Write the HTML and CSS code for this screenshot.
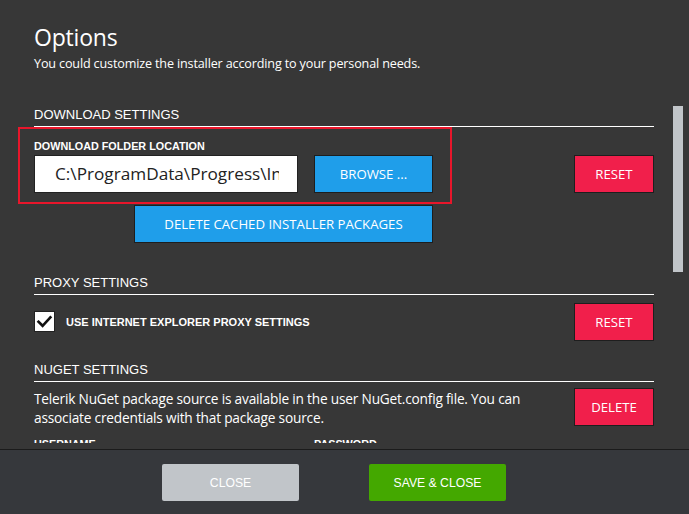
FILE: index.html
```html
<!DOCTYPE html>
<html>
<head>
<meta charset="utf-8">
<link rel="stylesheet" href="styles.css">
</head>
<body>
<div class="window">
  <div class="scroll">
    <div class="viewport">
    <div class="content">
      <h1 class="title">Options</h1>
      <p class="subtitle">You could customize the installer according to your personal needs.</p>

      <section class="section download">
        <h2 class="sec-title">DOWNLOAD SETTINGS</h2>
        <div class="sec-body">
          <div class="main">
            <div class="field-label">DOWNLOAD FOLDER LOCATION</div>
            <div class="folder-row">
              <div class="path-input"><span>C:\ProgramData\Progress\Installer</span></div>
              <button class="btn btn-blue browse">BROWSE ...</button>
            </div>
            <button class="btn btn-blue delete-cache">DELETE CACHED INSTALLER PACKAGES</button>
          </div>
          <div class="side side-download">
            <button class="btn btn-red">RESET</button>
          </div>
        </div>
        <div class="highlight"></div>
      </section>

      <section class="section proxy">
        <h2 class="sec-title">PROXY SETTINGS</h2>
        <div class="sec-body">
          <div class="main check-row">
            <span class="checkbox">
              <svg viewBox="0 0 21 21" width="21" height="21"><path d="M4.5 10.8 L8.6 14.8 L16.4 6.4" fill="none" stroke="#111" stroke-width="2.6" stroke-linecap="square"/></svg>
            </span>
            <span class="check-label">USE INTERNET EXPLORER PROXY SETTINGS</span>
          </div>
          <div class="side">
            <button class="btn btn-red">RESET</button>
          </div>
        </div>
      </section>

      <section class="section nuget">
        <h2 class="sec-title">NUGET SETTINGS</h2>
        <div class="sec-body">
          <div class="main">
            <p class="nuget-text">Telerik NuGet package source is available in the user NuGet.config file. You can associate credentials with that package source.</p>
          </div>
          <div class="side">
            <button class="btn btn-red">DELETE</button>
          </div>
        </div>
        <div class="cred-labels">
          <span class="cred user">USERNAME</span>
          <span class="cred pass">PASSWORD</span>
        </div>
      </section>
    </div>
    </div>
    <div class="scrollbar"></div>
  </div>
  <div class="footer">
    <button class="fbtn fbtn-gray">CLOSE</button>
    <button class="fbtn fbtn-green">SAVE &amp; CLOSE</button>
  </div>
</div>
</body>
</html>
```

FILE: styles.css
```css
* { box-sizing: border-box; }

html, body {
  margin: 0;
  padding: 0;
  background: #373737;
}

body {
  font-family: "Open Sans", "Noto Sans", sans-serif;
  color: #fff;
}

.window {
  width: 689px;
  height: 514px;
  display: flex;
  flex-direction: column;
  background: #373737;
}

.scroll {
  position: relative;
  height: 450px;
  border-bottom: 1px solid #1b1b1b;
}

.viewport {
  height: 443px;
  overflow: hidden;
}

.content {
  width: 654px;
  padding: 21px 0 0 34px;
}

.title {
  margin: 0;
  font-weight: 400;
  font-size: 23px;
  line-height: 32px;
  letter-spacing: -0.2px;
}

.subtitle {
  margin: 3px 0 0;
  font-size: 12.6px;
  line-height: 16px;
  letter-spacing: -0.15px;
}

.section {
  position: relative;
}

.sec-title {
  margin: 0;
  font-family: "Liberation Sans", Arial, sans-serif;
  font-weight: 400;
  font-size: 13px;
  line-height: 15px;
  padding-bottom: 4px;
  border-bottom: 1px solid #fff;
}

.download { margin-top: 35px; }

.sec-body {
  display: grid;
  grid-template-columns: 1fr 80px;
  column-gap: 0;
}

.field-label {
  margin-top: 13px;
  font-family: "Liberation Sans", Arial, sans-serif;
  font-weight: 700;
  font-size: 10.8px;
  line-height: 12px;
}

.folder-row {
  display: flex;
  gap: 16px;
  margin-top: 3px;
}

.path-input {
  width: 264px;
  height: 38px;
  background: #fff;
  border: 1px solid #222;
  overflow: hidden;
  white-space: nowrap;
  color: #222;
  font-size: 17.2px;
  line-height: 35px;
  padding: 0 18px 0 20px;
}

.path-input span {
  display: block;
  overflow: hidden;
}

.btn {
  font-family: "Open Sans", "Noto Sans", sans-serif;
  color: #fff;
  font-size: 13.2px;
  border: 1px solid #1e1e1e;
  height: 38px;
  padding: 0;
  cursor: pointer;
}

.btn-blue { background: #1f9eea; }
.btn-red { background: #f11f4b; width: 80px; }

.browse { width: 119px; }

.delete-cache {
  display: block;
  width: 299px;
  height: 38px;
  margin: 12px 0 0 100px;
}

.side {
  display: flex;
  align-items: flex-start;
}

.side-download { padding-top: 28px; }

.highlight {
  position: absolute;
  left: -16px;
  top: 20px;
  width: 434px;
  height: 77px;
  border: 2px solid #e8162b;
  pointer-events: none;
}

.proxy { margin-top: 32px; }

.proxy .side { padding-top: 8px; }

.check-row {
  display: flex;
  align-items: center;
  gap: 11px;
  margin-top: 16px;
  align-self: start;
}

.checkbox {
  width: 21px;
  height: 21px;
  background: #fff;
  border: 1px solid #222;
  display: flex;
  align-items: center;
  justify-content: center;
}

.checkbox svg { display: block; margin: -1px; }

.check-label {
  font-family: "Liberation Sans", Arial, sans-serif;
  font-weight: 700;
  font-size: 11px;
}

.nuget { margin-top: 21px; }

.nuget .side { padding-top: 6px; }

.nuget-text {
  margin: 7px 0 0;
  width: 500px;
  font-size: 13.7px;
  line-height: 19px;
  letter-spacing: -0.2px;
}

.cred-labels {
  display: flex;
  margin-top: 11px;
  font-family: "Liberation Sans", Arial, sans-serif;
  font-weight: 700;
  font-size: 10.8px;
  line-height: 12px;
}

.cred.user { width: 280px; }

.scrollbar {
  position: absolute;
  left: 673px;
  top: 106px;
  width: 10px;
  height: 166px;
  background: #c1c5c9;
}

.footer {
  flex: 1;
  background: #36383c;
  display: flex;
  justify-content: flex-start;
  align-items: flex-start;
  gap: 70px;
  padding: 14px 0 0 162px;
}

.fbtn {
  width: 137px;
  height: 37px;
  border: none;
  border-radius: 2px;
  color: #fff;
  font-family: "Liberation Sans", Arial, sans-serif;
  font-size: 12.2px;
  padding: 0;
}

.fbtn-gray { background: #c1c5c9; }
.fbtn-green { background: #44a800; }
```
